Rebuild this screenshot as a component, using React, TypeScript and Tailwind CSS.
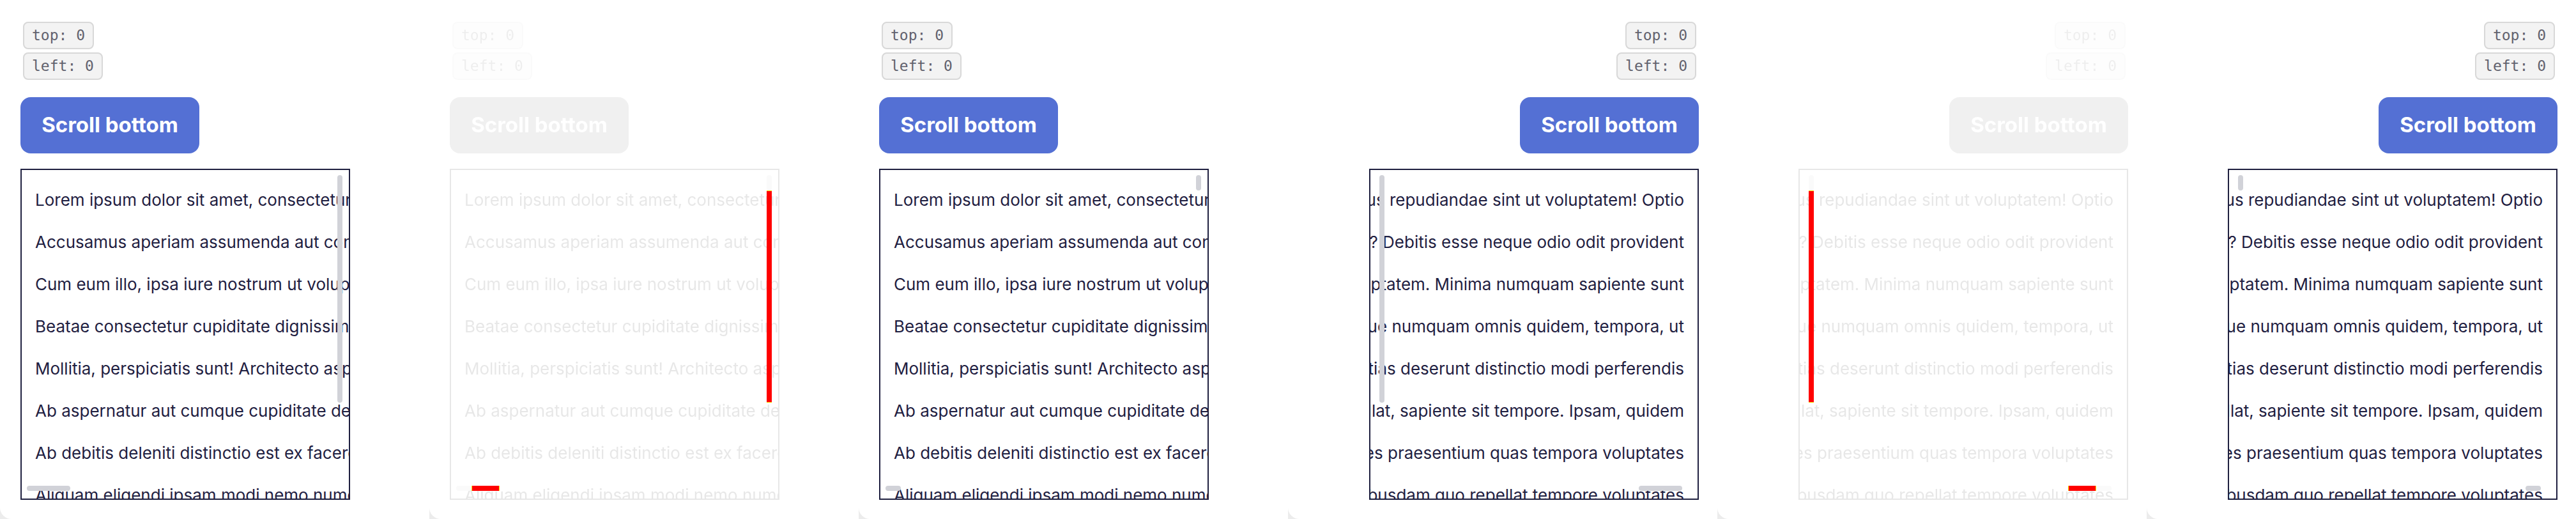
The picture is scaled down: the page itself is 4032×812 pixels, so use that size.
import React from 'react';

type Mode = 'expected' | 'diff' | 'actual';

const lines = [
  'Lorem ipsum dolor sit amet, consectetur adipisicing elit. Nostrum, vel officia eius repudiandae sint ut voluptatem! Optio',
  'Accusamus aperiam assumenda aut consequatur, dolorum nemo quas? Debitis esse neque odio odit provident',
  'Cum eum illo, ipsa iure nostrum ut voluptas dolor, at quidem eos voluptatem. Minima numquam sapiente sunt',
  'Beatae consectetur cupiditate dignissimos laborum, atque numquam omnis quidem, tempora, ut',
  'Mollitia, perspiciatis sunt! Architecto asperiores, molestias deserunt distinctio modi perferendis',
  'Ab aspernatur aut cumque cupiditate debitis, illum repellat, sapiente sit tempore. Ipsam, quidem',
  'Ab debitis deleniti distinctio est ex facere, nihil dolores praesentium quas tempora voluptates',
  'Aliquam eligendi ipsam modi nemo numquam, odio quibusdam quo repellat tempore voluptates',
  'Dolorem eveniet fugiat, quasi laudantium voluptatum nobis recusandae',
];

// thumb sizes as measured in each capture
const thumbs = {
  expected: { v: 356, h: 68 },
  actual: { v: 24, h: 24 },
  diff: { v: 24, h: 24 },
};

const Tag: React.FC<{ children: React.ReactNode }> = ({ children }) => (
  <code className="h-[43px] flex items-center px-[12px] border-2 border-[#d8d8d8] bg-[#f3f3f3] rounded-[8px] text-[23px] text-[#62626e] font-['DejaVu_Sans_Mono',monospace] whitespace-pre">
    {children}
  </code>
);

const Panel: React.FC<{ rtl?: boolean; mode: Mode }> = ({ rtl = false, mode }) => {
  const fade = mode === 'diff' ? 'grayscale opacity-10' : '';
  const t = thumbs[mode];

  return (
    <div
      dir={rtl ? 'rtl' : 'ltr'}
      className={`w-[672px] h-full shrink-0 bg-white rounded-bl-[18px] pt-[34px] flex flex-col items-start ${rtl ? 'pr-[29px]' : 'pl-[32px]'}`}
    >
      <div className={`flex flex-col items-start gap-[5px] ms-[4px] ${fade}`}>
        <Tag>top: 0</Tag>
        <Tag>left: 0</Tag>
      </div>

      <button
        className={`mt-[27px] w-[280px] h-[88px] rounded-[16px] bg-[#5470d4] text-white text-[33px] font-bold font-[Inter,sans-serif] flex items-center justify-center ${fade}`}
      >
        Scroll bottom
      </button>

      <div className="relative mt-[24px] w-[516px] h-[518px]">
        <div className={`absolute inset-0 border-2 border-[#1f2040] overflow-hidden bg-white ${fade}`}>
          <div className="pt-[14px] px-[21px] text-[26px] text-[#1f2041] font-[Inter,sans-serif]">
            {lines.map((l, i) => (
              <div key={i} className="whitespace-nowrap leading-[66px]">
                {l}
              </div>
            ))}
          </div>
          {/* scrollbar thumbs */}
          <div
            className={`absolute top-[8px] w-[8px] rounded-full bg-[#d1d2d8] ${rtl ? 'left-[14px]' : 'right-[10px]'}`}
            style={{ height: t.v }}
          />
          <div
            className={`absolute bottom-[12px] h-[8px] rounded-full bg-[#d1d2d8] ${rtl ? 'right-[24px]' : 'left-[8px]'}`}
            style={{ width: t.h }}
          />
        </div>

        {mode === 'diff' && (
          <>
            <div
              className={`absolute top-[34px] h-[332px] w-[8px] bg-[#ff0000] border-y border-[#f2e600] ${rtl ? 'left-[16px]' : 'right-[12px]'}`}
            />
            <div
              className={`absolute bottom-[14px] h-[8px] w-[44px] bg-[#ff0000] border-x border-[#f2e600] ${rtl ? 'right-[50px]' : 'left-[34px]'}`}
            />
          </>
        )}
      </div>
    </div>
  );
};

export default function App() {
  return (
    <div className="flex w-[4032px] h-[812px] bg-[#ececec] overflow-hidden">
      <Panel mode="expected" />
      <Panel mode="diff" />
      <Panel mode="actual" />
      <Panel rtl mode="expected" />
      <Panel rtl mode="diff" />
      <Panel rtl mode="actual" />
    </div>
  );
}
